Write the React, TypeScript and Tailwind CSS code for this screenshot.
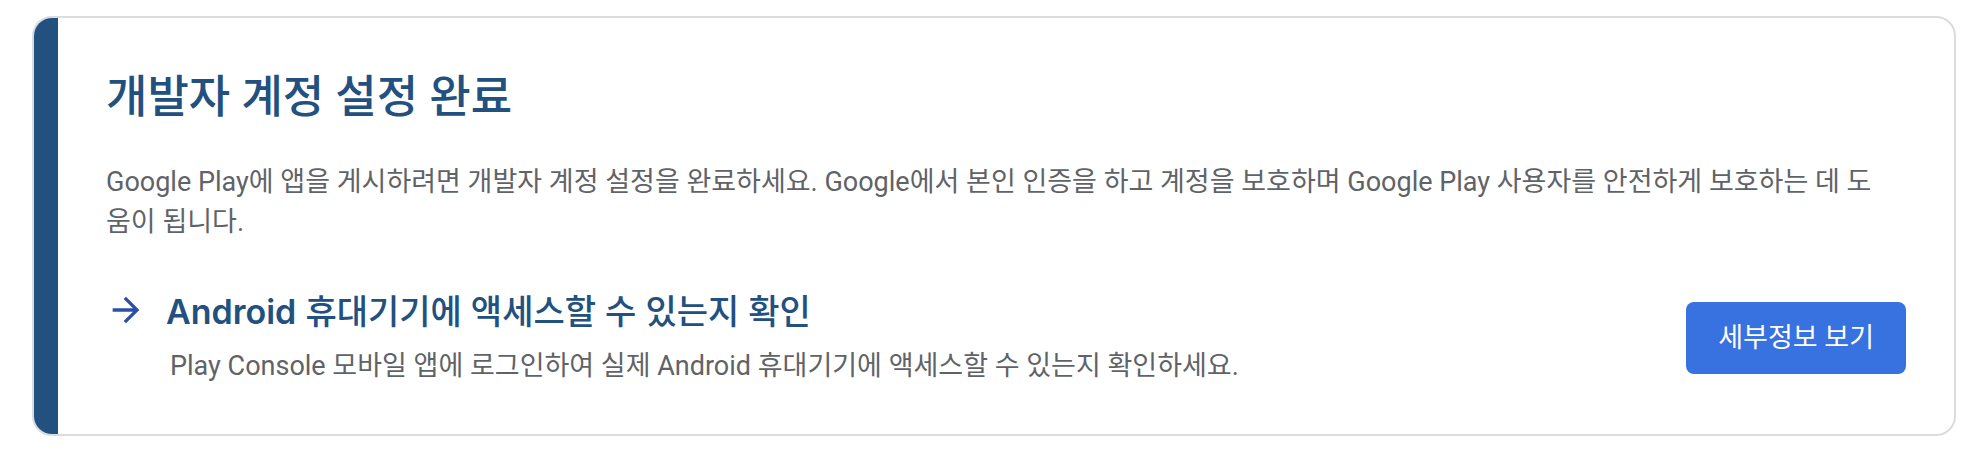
export default function App() {
  return (
    <main className="bg-white py-4 pl-8 pr-7 font-[Roboto,'Noto_Sans_CJK_KR',sans-serif]">
      <section className="flex overflow-hidden rounded-[20px] border-2 border-[#dadce0]">
        <div className="w-6 shrink-0 bg-[#22507f]" />
        <div className="min-w-0 flex-1 p-12">
          <h1 className="text-[45px] leading-[64px] font-medium text-[#22507f]">개발자 계정 설정 완료</h1>
          <p className="mt-8 break-all pr-4 text-[27px] leading-10 text-[#5f6368]">
            Google Play에 앱을 게시하려면 개발자 계정 설정을 완료하세요. Google에서 본인 인증을 하고 계정을 보호하며 Google Play 사용자를 안전하게 보호하는 데 도움이 됩니다.
          </p>
          <div className="mt-11 flex items-end">
            <svg className="mr-5 mt-1 h-10 w-10 shrink-0 self-start" viewBox="0 0 24 24" fill="#2a50a4" aria-hidden="true">
              <path d="M12 4l-1.41 1.41L16.17 11H4v2h12.17l-5.58 5.59L12 20l8-8z" />
            </svg>
            <div className="min-w-0 flex-1">
              <h2 className="font-[Inter,'Noto_Sans_CJK_KR',sans-serif] text-[34px] leading-[52px] font-medium text-[#22507f]"><span className="font-semibold">Android</span> 휴대기기에 액세스할 수 있는지 확인</h2>
              <p className="mt-2 pl-1 text-[27px] leading-10 text-[#5f6368]">Play Console 모바일 앱에 로그인하여 실제 Android 휴대기기에 액세스할 수 있는지 확인하세요.</p>
            </div>
            <button type="button" className="mb-3 h-[72px] shrink-0 rounded-lg bg-[#3871e0] px-8 text-[27px] text-white">세부정보 보기</button>
          </div>
        </div>
      </section>
    </main>
  );
}
